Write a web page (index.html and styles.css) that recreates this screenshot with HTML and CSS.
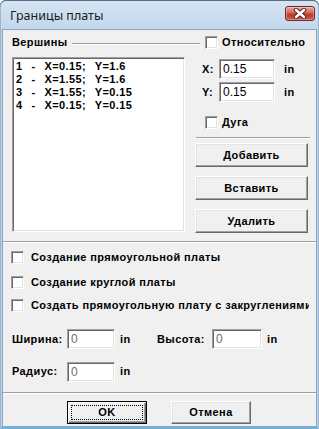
FILE: index.html
```html
<!DOCTYPE html>
<html lang="ru">
<head>
  <meta charset="UTF-8">
  <title>Границы платы</title>
  <link rel="stylesheet" href="styles.css">
</head>
<body>
  <div class="window">
    <div class="titlebar">
      <span class="title">Границы платы</span>
      <span class="close">
        <svg width="14" height="11" viewBox="0 0 14 11">
          <path d="M3 2 L11 9 M11 2 L3 9" stroke="#5a1e18" stroke-width="4.4" stroke-linecap="round"/>
          <path d="M3 2 L11 9 M11 2 L3 9" stroke="#fff" stroke-width="2.6" stroke-linecap="round"/>
        </svg>
      </span>
    </div>

    <div class="client">
      <div class="top">
        <div class="verts">
          <div class="legend"><span>Вершины</span><i class="rule"></i></div>
          <div class="list sunken">
            <div class="item">1  -  X=0.15;  Y=1.6</div>
            <div class="item">2  -  X=1.55;  Y=1.6</div>
            <div class="item">3  -  X=1.55;  Y=0.15</div>
            <div class="item">4  -  X=0.15;  Y=0.15</div>
          </div>
        </div>

        <div class="side">
          <label class="check rel"><span class="box sunken"></span>Относительно</label>
          <div class="coord first">
            <span class="axis">X:</span><span class="edit sunken">0.15</span><span class="unit">in</span>
          </div>
          <div class="coord">
            <span class="axis">Y:</span><span class="edit sunken">0.15</span><span class="unit">in</span>
          </div>
          <label class="check arc"><span class="box sunken"></span>Дуга</label>
          <div class="sep short"></div>
          <span class="btn add">Добавить</span>
          <span class="btn">Вставить</span>
          <span class="btn">Удалить</span>
        </div>
      </div>

      <div class="sep"></div>

      <div class="options">
        <label class="check opt"><span class="box sunken"></span>Создание прямоугольной платы</label>
        <label class="check opt second"><span class="box sunken"></span>Создание круглой платы</label>
        <label class="check opt third"><span class="box sunken"></span>Создать прямоугольную плату с закруглениями</label>
      </div>

      <div class="dims">
        <div class="dim-row">
          <span class="dim-label">Ширина:</span>
          <span class="edit small sunken disabled">0</span>
          <span class="unit">in</span>
          <span class="dim-label second">Высота:</span>
          <span class="edit small wide sunken disabled">0</span>
          <span class="unit">in</span>
        </div>
        <div class="dim-row radius">
          <span class="dim-label">Радиус:</span>
          <span class="edit small sunken disabled">0</span>
          <span class="unit">in</span>
        </div>
      </div>

      <div class="sep"></div>

      <div class="actions">
        <span class="btn default"><span class="focus">OK</span></span>
        <span class="btn cancel">Отмена</span>
      </div>
    </div>
  </div>
</body>
</html>
```

FILE: styles.css
```css
html, body {
  margin: 0;
  padding: 0;
  background: #fff;
}

.window {
  width: 319px;
  height: 429px;
  box-sizing: border-box;
  padding: 0 2px 2px;
  background: #bcd4ea;
  border-radius: 6px 6px 0 0;
  box-shadow: inset 0 1px #5d6e80, inset 1px 0 #9cb7d1, inset -1px 0 #9cb7d1, inset 0 -2px #6bb4e2;
  font-family: "Liberation Sans", Arial, sans-serif;
  font-size: 11px;
  font-weight: bold;
  letter-spacing: 0.4px;
  color: #000;
}

/* title bar */
.titlebar {
  height: 29px;
  display: flex;
  align-items: flex-start;
  justify-content: space-between;
  background: linear-gradient(#d6e5f4, #c2d7ec);
  margin: 0 -2px;
  padding: 0 4px 0 10px;
  border-radius: 6px 6px 0 0;
  box-shadow: inset 0 1px #5d6e80, inset 1px 0 #9cb7d1, inset -1px 0 #9cb7d1;
}

.title {
  font-family: "Noto Sans", "Open Sans", sans-serif;
  font-weight: normal;
  font-size: 12.5px;
  letter-spacing: 0;
  color: #1b1b1b;
  margin-top: 7px;
}

.close {
  width: 30px;
  height: 15px;
  margin-top: 6px;
  box-sizing: border-box;
  border: 1px solid #6b2a24;
  border-radius: 3px;
  background: linear-gradient(#e8a89e, #d2685b 45%, #c0392c 55%, #cc5a48);
  box-shadow: inset 0 0 0 1px rgba(255, 255, 255, 0.35);
  display: flex;
  align-items: center;
  justify-content: center;
}

/* client area */
.client {
  height: 398px;
  box-sizing: border-box;
  border: 1px solid #8ca6bf;
  background: #f0f0f0;
  line-height: 13px;
}

.sunken {
  box-sizing: border-box;
  border: 1px solid;
  border-color: #a0a0a0 #fff #fff #a0a0a0;
  box-shadow: inset 1px 1px #696969, inset -1px -1px #e3e3e3;
  background: #fff;
}

.sep {
  height: 1px;
  border-top: 1px solid #a0a0a0;
  background: #fff;
}

.top {
  display: flex;
  height: 211px;
}

.verts {
  width: 192px;
  padding: 6px 0 0 9px;
  box-sizing: border-box;
}

.legend {
  width: 188px;
  display: flex;
  align-items: center;
  gap: 4px;
}

.rule {
  flex: 1;
  height: 1px;
  border-top: 1px solid #a0a0a0;
  background: #fff;
  margin-top: 2px;
}

.list {
  width: 173px;
  height: 175px;
  margin-top: 8px;
  padding: 2px 3px;
}

.item {
  white-space: pre;
  word-spacing: 1px;
}

.side {
  width: 115px;
}

.check {
  display: flex;
  align-items: center;
  gap: 4px;
  white-space: nowrap;
}

.box {
  width: 13px;
  height: 13px;
  flex: none;
}

.check.rel {
  margin: 6px 0 0 10px;
}

.coord {
  display: flex;
  align-items: center;
  height: 20px;
  margin-top: 3px;
}

.coord.first {
  margin-top: 10px;
}

.axis {
  width: 17px;
  padding-left: 7px;
}

.edit {
  width: 56px;
  height: 20px;
  padding: 3px 3px 0;
  font-weight: normal;
  font-size: 12px;
  letter-spacing: 0;
  font-family: "Liberation Sans", Arial, sans-serif;
}

.unit {
  margin-left: 9px;
}

.check.arc {
  margin: 14px 0 0 10px;
}

.sep.short {
  margin: 8px 0 0 1px;
}

.btn {
  display: flex;
  align-items: center;
  justify-content: center;
  width: 113px;
  height: 24px;
  margin-top: 9px;
  box-sizing: border-box;
  background: #f0f0f0;
  border: 1px solid;
  border-color: #fff #696969 #696969 #fff;
  box-shadow: inset -1px -1px #a0a0a0, inset 1px 1px #e3e3e3;
}

.btn.add {
  margin-top: 4px;
}

/* option checkboxes */
.options {
  padding-left: 8px;
  width: 306px;
  box-sizing: border-box;
  overflow: hidden;
}

.check.opt {
  margin-top: 8px;
  gap: 7px;
  overflow: hidden;
}

.check.opt.second {
  margin-top: 12px;
}

.check.opt.third {
  margin-top: 10px;
}

/* dimensions */
.dims {
  padding: 17px 0 10px 9px;
}

.dim-row {
  display: flex;
  align-items: center;
  height: 20px;
}

.dim-row.radius {
  margin-top: 12px;
  height: 21px;
}

.dim-label {
  width: 55px;
}

.dim-label.second {
  margin-left: 25px;
}

.edit.small {
  width: 48px;
}

.edit.wide {
  width: 50px;
}

.disabled {
  color: #6d6d6d;
}

.dim-row .unit {
  margin-left: 5px;
  width: 12px;
}

/* bottom buttons */
.actions {
  display: flex;
  gap: 24px;
  padding: 7px 0 0 64px;
}

.actions .btn {
  width: 80px;
  height: 23px;
  margin: 0;
}

.btn.default {
  border: 1px solid #000;
  box-shadow: inset 1px 1px #fff, inset -1px -1px #696969, inset -2px -2px #a0a0a0;
  padding: 3px;
}

.focus {
  flex: 1;
  align-self: stretch;
  display: flex;
  align-items: center;
  justify-content: center;
  outline: 1px dotted #000;
  outline-offset: -1px;
}
```
